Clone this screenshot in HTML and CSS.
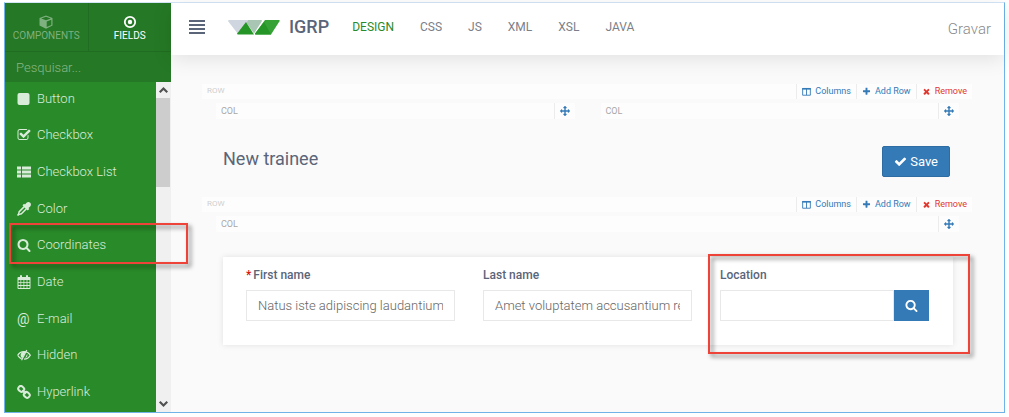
FILE: index.html
```html
<!DOCTYPE html>
<html lang="en">
<head>
<meta charset="utf-8">
<title>IGRP</title>
<link rel="stylesheet" href="styles.css">
</head>
<body>
<svg class="sprite" aria-hidden="true">
  <symbol id="i-search" viewBox="0 0 1792 1792"><path d="M1216 832q0-185-131.500-316.500t-316.500-131.500-316.500 131.500-131.500 316.500 131.500 316.500 316.500 131.500 316.500-131.500 131.500-316.500zm512 832q0 52-38 90t-90 38q-54 0-90-38l-343-342q-179 124-399 124-143 0-273.500-55.500t-225-150-150-225-55.500-273.500 55.500-273.500 150-225 225-150 273.500-55.500 273.500 55.500 225 150 150 225 55.500 273.500q0 220-124 399l343 343q37 37 37 90z"/></symbol>
  <symbol id="i-check" viewBox="0 0 1792 1792"><path d="M1671 566q0 40-28 68l-724 724-136 136q-28 28-68 28t-68-28l-136-136-362-362q-28-28-28-68t28-68l136-136q28-28 68-28t68 28l294 295 656-657q28-28 68-28t68 28l136 136q28 28 28 68z"/></symbol>
  <symbol id="i-plus" viewBox="0 0 1792 1792"><path d="M1600 736v192q0 40-28 68t-68 28h-416v416q0 40-28 68t-68 28h-192q-40 0-68-28t-28-68v-416h-416q-40 0-68-28t-28-68v-192q0-40 28-68t68-28h416v-416q0-40 28-68t68-28h192q40 0 68 28t28 68v416h416q40 0 68 28t28 68z"/></symbol>
  <symbol id="i-times" viewBox="0 0 1792 1792"><path d="M1490 1322q0 40-28 68l-136 136q-28 28-68 28t-68-28l-294-294-294 294q-28 28-68 28t-68-28l-136-136q-28-28-28-68t28-68l294-294-294-294q-28-28-28-68t28-68l136-136q28-28 68-28t68 28l294 294 294-294q28-28 68-28t68 28l136 136q28 28 28 68t-28 68l-294 294 294 294q28 28 28 68z"/></symbol>
  <symbol id="i-move" viewBox="0 0 1792 1792"><path d="M1792 896q0 26-19 45l-256 256q-19 19-45 19t-45-19-19-45v-128h-384v384h128q26 0 45 19t19 45-19 45l-256 256q-19 19-45 19t-45-19l-256-256q-19-19-19-45t19-45 45-19h128v-384h-384v128q0 26-19 45t-45 19-45-19l-256-256q-19-19-19-45t19-45l256-256q19-19 45-19t45 19 19 45v128h384v-384h-128q-26 0-45-19t-19-45 19-45l256-256q19-19 45-19t45 19l256 256q19 19 19 45t-19 45-45 19h-128v384h384v-128q0-26 19-45t45-19 45 19l256 256q19 19 19 45z"/></symbol>
  <symbol id="i-checkbox" viewBox="0 0 1792 1792"><path d="M1472 930v318q0 119-84.500 203.500t-203.500 84.500h-832q-119 0-203.500-84.500t-84.500-203.500v-832q0-119 84.500-203.500t203.500-84.500h832q63 0 117 25 15 7 18 23 3 17-9 29l-49 49q-10 10-23 10-3 0-9-2-23-6-45-6h-832q-66 0-113 47t-47 113v832q0 66 47 113t113 47h832q66 0 113-47t47-113v-254q0-13 9-22l64-64q10-10 23-10 6 0 12 3 20 8 20 29zm231-489l-814 814q-24 24-57 24t-57-24l-430-430q-24-24-24-57t24-57l110-110q24-24 57-24t57 24l263 263 647-647q24-24 57-24t57 24l110 110q24 24 24 57t-24 57z"/></symbol>
  <symbol id="i-square" viewBox="0 0 14 14"><rect x="0.500" y="1" width="12" height="12" rx="2"/></symbol>
  <symbol id="i-list" viewBox="0 0 14 14"><path d="M0 1.500h4v3H0zM5 1.500h9v3H5zM0 5.500h4v3H0zM5 5.500h9v3H5zM0 9.500h4v3H0zM5 9.500h9v3H5z"/></symbol>
  <symbol id="i-dropper" viewBox="0 0 14 14"><path fill-rule="evenodd" d="M13.200.8c-1-1-2.600-1-3.600 0L8 2.500l-.9-.8L5.500 3.300l1 1-5 5L1 11.500 0 13l1 1 1.500-1 2.200-.5 5-5 1 1 1.600-1.600-.8-.9 1.700-1.600c1-1 1-2.600 0-3.600zM7.500 5.400l1.100 1.100-4.500 4.500-1.900.8.800-1.900z"/></symbol>
  <symbol id="i-calendar" viewBox="0 0 14 14"><path fill-rule="evenodd" d="M1.500 2H3V1a1 1 0 0 1 2 0v1h4V1a1 1 0 0 1 2 0v1h1.500a1 1 0 0 1 1 1v10a1 1 0 0 1-1 1h-11a1 1 0 0 1-1-1V3a1 1 0 0 1 1-1zM1.500 5v2h2V5zM4.200 5v2h2.300V5zM7.300 5v2h2.300V5zM10.400 5v2h2.100V5zM1.500 7.800v2.300h2V7.800zM4.200 7.800v2.300h2.300V7.800zM7.300 7.800v2.300h2.300V7.800zM10.400 7.800v2.300h2.100V7.800zM1.500 10.900V13h2v-2.100zM4.200 10.900V13h2.300v-2.100zM7.300 10.900V13h2.300v-2.100zM10.400 10.900V13h2.100v-2.100z"/></symbol>
  <symbol id="i-hidden" viewBox="0 0 14 14"><path d="M.7 7.300C3.500 2.300 10.500 2.300 13.300 7.300 11.900 9.800 9.600 11.200 7 11.200M.7 7.300c1 1.800 2.300 2.900 3.900 3.500" fill="none" stroke="currentColor" stroke-width="1.300"/><path d="M3.600 7.500C3.400 5.200 5.300 3.600 7.300 3.800l1.300.3-3.200 6C4.300 9.600 3.700 8.700 3.600 7.500zM10.200 5.800c.7 2-.3 3.800-2.100 4.600z"/><path d="M9.800 2 4.600 12.300" stroke="currentColor" stroke-width="1.200"/></symbol>
  <symbol id="i-link" viewBox="0 0 14 14"><g fill="none" stroke="currentColor" stroke-width="2"><rect x="1.200" y="1.400" width="6" height="5" rx="2.300" transform="rotate(40 4.200 3.900)"/><rect x="6.800" y="7.400" width="6" height="5" rx="2.300" transform="rotate(40 9.800 9.900)"/><path d="m5.300 5.300 3.500 3.400"/></g></symbol>
  <symbol id="i-cube" viewBox="0 0 14 14"><path fill-rule="evenodd" d="M7 .5 13.500 3v7.500L7 13.700.5 10.500V3zM7 1.700 2.200 3.500 7 5.300l4.800-1.800zM7.700 6.500v5.600l4.600-2.200V4.700z"/></symbol>
  <symbol id="i-target" viewBox="0 0 14 14"><circle cx="7" cy="7" r="5.200" fill="none" stroke="currentColor" stroke-width="1.800"/><circle cx="7" cy="7" r="2.200"/></symbol>
  <symbol id="i-columns" viewBox="0 0 14 14"><path d="M1 2.500h12v10.300H1zM7 2.500v10" fill="none" stroke="currentColor" stroke-width="1.400"/><path d="M.3 1.500h13.400v2.500H.3z"/></symbol>
  <symbol id="i-up" viewBox="0 0 14 14"><path d="m3.500 9 3.500-3.500L10.500 9" fill="none" stroke="currentColor" stroke-width="2"/></symbol>
  <symbol id="i-down" viewBox="0 0 14 14"><path d="M3.500 5 7 8.500 10.500 5" fill="none" stroke="currentColor" stroke-width="2"/></symbol>
</svg>

<div class="app">
  <aside class="sidebar">
    <div class="tabs">
      <button class="tab" type="button"><svg class="tab-icon"><use href="#i-cube"/></svg>COMPONENTS</button>
      <button class="tab tab-active" type="button"><svg class="tab-icon"><use href="#i-target"/></svg>FIELDS</button>
    </div>
    <input class="filter" type="text" placeholder="Pesquisar..." aria-label="Pesquisar">
    <div class="palette">
      <ul class="fields">
        <li class="field-type"><svg class="icon"><use href="#i-square"/></svg>Button</li>
        <li class="field-type"><svg class="icon"><use href="#i-checkbox"/></svg>Checkbox</li>
        <li class="field-type"><svg class="icon"><use href="#i-list"/></svg>Checkbox List</li>
        <li class="field-type"><svg class="icon"><use href="#i-dropper"/></svg>Color</li>
        <li class="field-type"><svg class="icon"><use href="#i-search"/></svg>Coordinates<span class="mark mark-item"></span></li>
        <li class="field-type"><svg class="icon"><use href="#i-calendar"/></svg>Date</li>
        <li class="field-type"><span class="icon at">@</span>E-mail</li>
        <li class="field-type"><svg class="icon"><use href="#i-hidden"/></svg>Hidden</li>
        <li class="field-type"><svg class="icon"><use href="#i-link"/></svg>Hyperlink</li>
      </ul>
      <div class="scrollbar">
        <svg class="scroll-arrow"><use href="#i-up"/></svg>
        <div class="scroll-track"><div class="scroll-thumb"></div></div>
        <svg class="scroll-arrow"><use href="#i-down"/></svg>
      </div>
    </div>
  </aside>

  <div class="workspace">
    <header class="topbar">
      <button class="menu" type="button" aria-label="Menu"><span class="menu-line"></span><span class="menu-line"></span><span class="menu-line"></span><span class="menu-line"></span></button>
      <svg class="logo" viewBox="0 0 52 15" aria-hidden="true">
        <path fill="#a9c6b5" d="M20 0h13q1.500 0 .7 1.500L26 13.500 18 2z"/>
        <path fill="#d0d6df" d="M1 0h19l-1.500 3L10 14 .3 1.500Q-.3 0 1 0z"/>
        <path fill="#249526" d="M18 2 26 14.500H10q-1.200 0-.6-1.200z"/>
        <path fill="#35a236" d="M37 0h14q1.300 0 .5 1.300L43 14.500H28q-1.500 0-.7-1.300z"/>
        <path fill="#249526" d="M36 2l7 12.500H28q-1.500 0-.7-1.300z"/>
      </svg>
      <span class="brand">IGRP</span>
      <nav class="views">
        <a class="view view-active" href="#">DESIGN</a>
        <a class="view" href="#">CSS</a>
        <a class="view" href="#">JS</a>
        <a class="view" href="#">XML</a>
        <a class="view" href="#">XSL</a>
        <a class="view" href="#">JAVA</a>
      </nav>
      <button class="commit" type="button">Gravar</button>
    </header>

    <main class="canvas">
      <section class="row">
        <div class="row-bar">
          <span class="row-name">ROW</span>
          <button class="tool" type="button"><svg class="tool-icon"><use href="#i-columns"/></svg>Columns</button>
          <button class="tool" type="button"><svg class="tool-icon"><use href="#i-plus"/></svg>Add Row</button>
          <button class="tool tool-remove" type="button"><svg class="tool-icon"><use href="#i-times"/></svg>Remove</button>
        </div>
        <div class="cols">
          <div class="col-bar">COL<button class="handle" type="button" aria-label="Move column"><svg class="move-icon"><use href="#i-move"/></svg></button></div>
          <div class="col-bar">COL<button class="handle" type="button" aria-label="Move column"><svg class="move-icon"><use href="#i-move"/></svg></button></div>
        </div>
        <div class="title-line">
          <h1 class="title">New trainee</h1>
          <button class="save" type="button"><svg class="save-icon"><use href="#i-check"/></svg>Save</button>
        </div>
      </section>

      <section class="row">
        <div class="row-bar">
          <span class="row-name">ROW</span>
          <button class="tool" type="button"><svg class="tool-icon"><use href="#i-columns"/></svg>Columns</button>
          <button class="tool" type="button"><svg class="tool-icon"><use href="#i-plus"/></svg>Add Row</button>
          <button class="tool tool-remove" type="button"><svg class="tool-icon"><use href="#i-times"/></svg>Remove</button>
        </div>
        <div class="cols">
          <div class="col-bar">COL<button class="handle" type="button" aria-label="Move column"><svg class="move-icon"><use href="#i-move"/></svg></button></div>
        </div>
        <form class="card">
          <div class="field">
            <label class="label" for="first"><span class="required">*</span>First name</label>
            <input class="input" id="first" type="text" value="Natus iste adipiscing laudantium consectetur">
          </div>
          <div class="field">
            <label class="label" for="last">Last name</label>
            <input class="input" id="last" type="text" value="Amet voluptatem accusantium rem aperiam">
          </div>
          <div class="field">
            <label class="label" for="location">Location</label>
            <div class="group">
              <input class="input" id="location" type="text">
              <button class="locate" type="button" aria-label="Search location"><svg class="locate-icon"><use href="#i-search"/></svg></button>
            </div>
            <span class="mark mark-field"></span>
          </div>
        </form>
      </section>
    </main>
  </div>
</div>
</body>
</html>
```
FILE: styles.css
```css
* {
  box-sizing: border-box;
}

body {
  margin: 0;
  padding: 2px 4px 4px;
  background: #fff;
  color: #5a6579;
  font-family: Roboto, "Liberation Sans", sans-serif;
}

button,
input {
  margin: 0;
  padding: 0;
  border: 0;
  border-radius: 0;
  background: none;
  color: inherit;
  font: inherit;
}

svg {
  display: block;
  flex: none;
  fill: currentColor;
}

.sprite {
  position: absolute;
  width: 0;
  height: 0;
}

.app {
  display: flex;
  min-height: calc(100vh - 6px);
  border: 1px solid #6fb3e8;
  border-top-color: #d3e6f7;
}

/* Sidebar */
.sidebar {
  display: flex;
  flex: none;
  flex-direction: column;
  width: 166px;
  background: #298a29;
}

.tabs {
  display: flex;
  height: 49px;
  background: #257825;
  border-bottom: 1px solid #206c20;
}

.tab {
  display: flex;
  flex: 1;
  flex-direction: column;
  align-items: center;
  gap: 0;
  padding-top: 12px;
  color: #7fb07f;
  font-size: 10px;
  line-height: 14px;
}

.tab + .tab {
  border-left: 1px solid #206c20;
}

.tab-active {
  color: #fff;
}

.tab-icon {
  width: 14px;
  height: 14px;
}

.filter {
  height: 30px;
  padding: 0 11px;
  background: #257825;
  font-size: 13px;
  font-weight: 300;
}

.filter::placeholder {
  color: #86b686;
}

.palette {
  display: flex;
  flex: 1;
}

.fields {
  display: grid;
  flex: 1;
  grid-auto-rows: 1fr;
  margin: 0;
  padding: 0;
  list-style: none;
}

.field-type {
  position: relative;
  display: flex;
  align-items: center;
  gap: 6px;
  padding: 0 12px 3px;
  color: #d9ecd9;
  font-size: 13px;
  font-weight: 300;
  line-height: 20px;
}

.icon {
  width: 14px;
  height: 14px;
}

.at {
  font-size: 14px;
  font-weight: 400;
  line-height: 14px;
}

.scrollbar {
  display: flex;
  flex-direction: column;
  width: 15px;
  background: #f0f0f0;
  color: #505050;
}

.scroll-arrow {
  width: 15px;
  height: 16px;
}

.scroll-track {
  flex: 1;
}

.scroll-thumb {
  height: 30%;
  margin: 0 1px 0 0;
  background: #cdcdcd;
}

/* Highlight frames */
.mark {
  position: absolute;
  z-index: 2;
  border: 2px solid #ee4339;
  filter: drop-shadow(3px 3px 2px rgba(0, 0, 0, 0.5));
  pointer-events: none;
}

.mark-item {
  inset: -6px -32px 1px 4px;
}

.mark-field {
  inset: -13px -41px -33px -12px;
}

/* Top bar */
.workspace {
  display: flex;
  flex: 1;
  flex-direction: column;
  min-width: 0;
  background: #fafafa;
}

.topbar {
  display: flex;
  align-items: center;
  height: 52px;
  padding: 0 13px 4px 18px;
  background: #fff;
  box-shadow: 0 4px 20px rgba(0, 0, 0, 0.1);
}

.menu {
  display: flex;
  flex-direction: column;
  gap: 2px;
  width: 16px;
  margin-right: 23px;
}

.menu-line {
  height: 2px;
  background: #5a6579;
}

.logo {
  width: 52px;
  height: 15px;
  margin-right: 9px;
}

.brand {
  font-size: 18px;
  font-weight: 500;
  line-height: 24px;
}

.views {
  display: flex;
  gap: 26px;
  margin-left: 23px;
}

.view {
  color: #7b8088;
  font-size: 12px;
  line-height: 20px;
  text-decoration: none;
}

.view-active {
  color: #298a29;
}

.commit {
  margin-left: auto;
  padding-top: 3px;
  color: #8a8a8a;
  font-size: 15px;
  font-weight: 300;
}

/* Design canvas */
.canvas {
  display: flex;
  flex-direction: column;
  gap: 20px;
  padding: 29px 32px 0 31px;
}

.row-bar {
  display: flex;
  height: 15px;
  background: #fdfdfd;
}

.row-name {
  flex: 1;
  padding-left: 5px;
  color: #cfcfcf;
  font-size: 8px;
  line-height: 14px;
}

.tool {
  display: flex;
  align-items: center;
  gap: 4px;
  padding: 0 5px;
  border-left: 1px solid #ececec;
  color: #337ab7;
  font-size: 9px;
  line-height: 15px;
}

.tool-remove {
  color: #e0382f;
}

.tool-icon {
  width: 9px;
  height: 9px;
}

.cols {
  display: grid;
  grid-auto-columns: 1fr;
  grid-auto-flow: column;
  gap: 26px;
  margin: 4px 13px 0 14px;
}

.col-bar {
  display: flex;
  justify-content: space-between;
  height: 16px;
  padding-left: 5px;
  background: #fdfdfd;
  color: #a8a8a8;
  font-size: 9px;
  line-height: 16px;
}

.handle {
  display: grid;
  place-items: center;
  width: 21px;
  border-left: 1px solid #ececec;
  color: #337ab7;
}

.move-icon {
  width: 10px;
  height: 10px;
}

.title-line {
  display: flex;
  align-items: center;
  justify-content: space-between;
  margin: 27px 22px 0 21px;
}

.title {
  margin: 0;
  padding-bottom: 6px;
  font-size: 18px;
  font-weight: 400;
  line-height: 24px;
}

.save {
  display: flex;
  align-items: center;
  gap: 3px;
  height: 31px;
  padding: 0 11px;
  border: 1px solid #2e6da4;
  border-radius: 2px;
  background: #337ab7;
  color: #fff;
  font-size: 13px;
}

.save-icon {
  width: 13px;
  height: 13px;
}

.card {
  display: grid;
  grid-template-columns: repeat(3, minmax(0, 1fr));
  gap: 28px;
  margin: 25px 19px 0 21px;
  padding: 10px 24px 24px 23px;
  background: #fff;
  box-shadow: 0 0 6px rgba(0, 0, 0, 0.1);
}

.field {
  position: relative;
}

.label {
  display: block;
  margin-bottom: 7px;
  font-size: 12px;
  font-weight: 500;
  line-height: 16px;
}

.required {
  margin-right: 2px;
  color: #d9140c;
}

.input {
  width: 100%;
  height: 31px;
  padding: 0 11px;
  border: 1px solid #e8e8e8;
  background: #fff;
  color: #666;
  font-size: 13px;
  font-weight: 300;
}

.group {
  display: flex;
}

.locate {
  display: grid;
  flex: none;
  place-items: center;
  width: 35px;
  background: #337ab7;
  color: #fff;
}

.locate-icon {
  width: 13px;
  height: 13px;
}
```
